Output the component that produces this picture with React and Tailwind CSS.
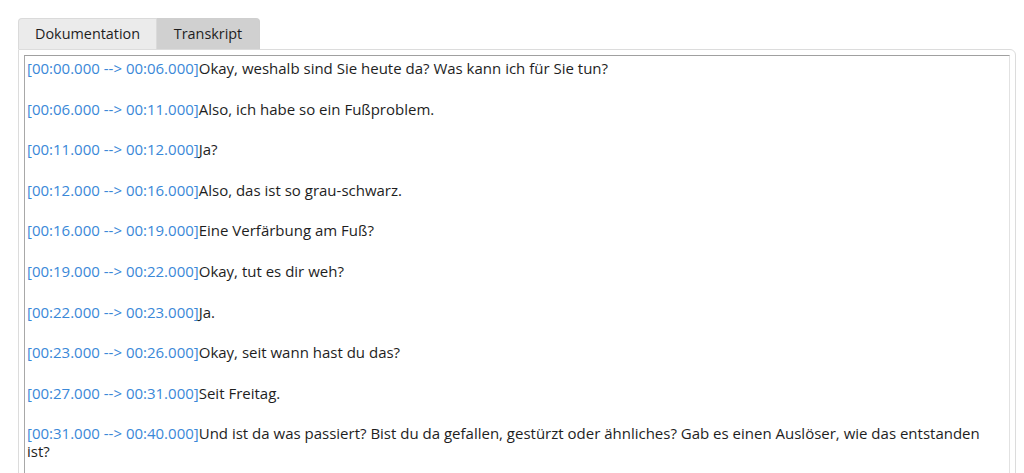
import React from "react";

const entries = [
  ["00:00.000", "00:06.000", ["Okay, weshalb sind Sie heute da? Was kann ich für Sie tun?"]],
  ["00:06.000", "00:11.000", ["Also, ich habe so ein Fußproblem."]],
  ["00:11.000", "00:12.000", ["Ja?"]],
  ["00:12.000", "00:16.000", ["Also, das ist so grau-schwarz."]],
  ["00:16.000", "00:19.000", ["Eine Verfärbung am Fuß?"]],
  ["00:19.000", "00:22.000", ["Okay, tut es dir weh?"]],
  ["00:22.000", "00:23.000", ["Ja."]],
  ["00:23.000", "00:26.000", ["Okay, seit wann hast du das?"]],
  ["00:27.000", "00:31.000", ["Seit Freitag."]],
  [
    "00:31.000",
    "00:40.000",
    [
      "Und ist da was passiert? Bist du da gefallen, gestürzt oder ähnliches? Gab es einen Auslöser, wie das entstanden",
      "ist?",
    ],
  ],
];

function App() {
  return (
    <div
      className="h-[473px] overflow-hidden bg-white pl-[18px] pr-[8px] pt-[18px] text-[#1e1e1e]"
      style={{ fontFamily: '"Open Sans", "Noto Sans", sans-serif' }}
    >
      {/* tabs */}
      <div className="flex text-[14.4px]">
        <div className="flex h-[31px] w-[139px] items-center rounded-tl-[4px] border border-b-0 border-[#dadada] bg-[#ebebeb] pl-[16px]">
          Dokumentation
        </div>
        <div className="flex h-[31px] w-[103px] items-center justify-center rounded-tr-[4px] border border-b-0 border-l-0 border-[#cfcfcf] bg-[#d0d0d0]">
          Transkript
        </div>
      </div>

      {/* panel */}
      <div className="h-[440px] rounded-tr-[6px] border border-[#dcdcdc] bg-white p-[5px]">
        <div className="h-full border border-t-[#a0a0a0] border-l-[#a8a8a8] border-r-[#e2e2e2] border-b-[#e2e2e2] pl-[2px] pr-[10px] pt-[3px] text-[15px]">
          {entries.map(([from, to, lines]) => (
            <p key={from} className="mb-[22.6px] whitespace-nowrap leading-[18px]">
              <span className="text-[#3a88d8]">
                [{from} --&gt; {to}]
              </span>
              {lines[0]}
              {lines[1] && (
                <>
                  <br />
                  {lines[1]}
                </>
              )}
            </p>
          ))}
        </div>
      </div>
    </div>
  );
}

export default App;
